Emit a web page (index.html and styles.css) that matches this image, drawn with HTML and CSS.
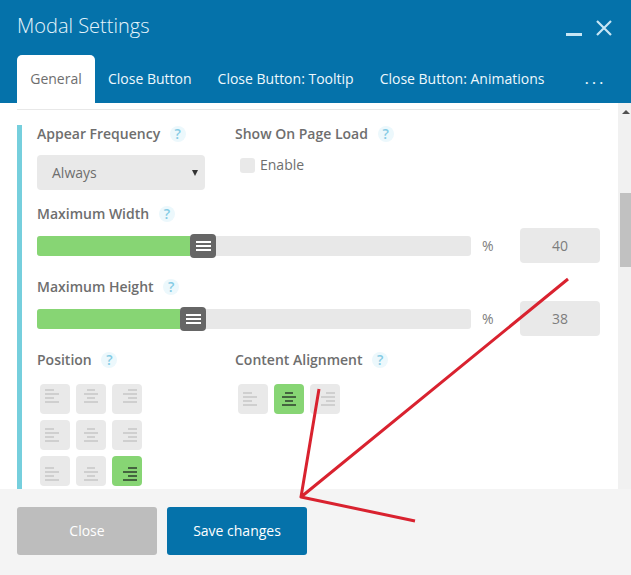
FILE: index.html
```html
<!DOCTYPE html>
<html>
<head>
    <meta charset="utf-8">
    <title>Modal Settings</title>
    <link rel="stylesheet" href="styles.css">
</head>
<body>

<div class="modal">
    <div class="modal-header">
        <div class="title-row">
            <div class="modal-title">Modal Settings</div>
            <div class="window-btns">
                <span class="minimize"></span>
                <svg class="close-x" viewBox="0 0 16 16"><path d="M1 1L15 15M15 1L1 15"/></svg>
            </div>
        </div>
        <div class="tabs">
            <div class="tab active">General</div>
            <div class="tab">Close Button</div>
            <div class="tab">Close Button: Tooltip</div>
            <div class="tab">Close Button: Animations</div>
            <div class="tab-more">...</div>
        </div>
    </div>

    <div class="modal-body">
        <div class="scroll-area">
            <div class="divider"></div>
            <div class="panel">
                <div class="two-cols first-row">
                    <div class="col-left">
                        <div class="field-label">Appear Frequency <span class="help">?</span></div>
                        <div class="select-box">Always<span class="select-arrow"></span></div>
                    </div>
                    <div class="col-right">
                        <div class="field-label">Show On Page Load <span class="help">?</span></div>
                        <label class="check-row"><span class="checkbox"></span>Enable</label>
                    </div>
                </div>

                <div class="field-label width-label">Maximum Width <span class="help">?</span></div>
                <div class="slider-row">
                    <div class="track">
                        <div class="fill" style="width: 153px"></div>
                        <div class="handle"><span></span></div>
                    </div>
                    <span class="unit">%</span>
                    <div class="num-box">40</div>
                </div>

                <div class="field-label height-label">Maximum Height <span class="help">?</span></div>
                <div class="slider-row">
                    <div class="track">
                        <div class="fill" style="width: 143px"></div>
                        <div class="handle"><span></span></div>
                    </div>
                    <span class="unit">%</span>
                    <div class="num-box">38</div>
                </div>

                <div class="two-cols position-row">
                    <div class="col-left">
                        <div class="field-label">Position <span class="help">?</span></div>
                        <div class="tile-grid">
                            <div class="tile"><svg viewBox="0 0 30 30"><path d="M5 6h9M5 10h14M5 14h9M5 18h14"/></svg></div>
                            <div class="tile"><svg viewBox="0 0 30 30"><path d="M11 6h8M8 10h14M11 14h8M8 18h14"/></svg></div>
                            <div class="tile"><svg viewBox="0 0 30 30"><path d="M16 6h9M11 10h14M16 14h9M11 18h14"/></svg></div>
                            <div class="tile"><svg viewBox="0 0 30 30"><path d="M5 9h9M5 13h14M5 17h9M5 21h14"/></svg></div>
                            <div class="tile"><svg viewBox="0 0 30 30"><path d="M11 9h8M8 13h14M11 17h8M8 21h14"/></svg></div>
                            <div class="tile"><svg viewBox="0 0 30 30"><path d="M16 9h9M11 13h14M16 17h9M11 21h14"/></svg></div>
                            <div class="tile"><svg viewBox="0 0 30 30"><path d="M5 12h9M5 16h14M5 20h9M5 24h14"/></svg></div>
                            <div class="tile"><svg viewBox="0 0 30 30"><path d="M11 12h8M8 16h14M11 20h8M8 24h14"/></svg></div>
                            <div class="tile on"><svg viewBox="0 0 30 30"><path d="M16 12h9M11 16h14M16 20h9M11 24h14"/></svg></div>
                        </div>
                    </div>
                    <div class="col-right">
                        <div class="field-label">Content Alignment <span class="help">?</span></div>
                        <div class="tile-row">
                            <div class="tile"><svg viewBox="0 0 30 30"><path d="M5 9h9M5 13h14M5 17h9M5 21h14"/></svg></div>
                            <div class="tile on"><svg viewBox="0 0 30 30"><path d="M11 9h8M8 13h14M11 17h8M8 21h14"/></svg></div>
                            <div class="tile"><svg viewBox="0 0 30 30"><path d="M16 9h9M11 13h14M16 17h9M11 21h14"/></svg></div>
                        </div>
                    </div>
                </div>
            </div>
        </div>
        <div class="scrollbar">
            <span class="scroll-up"></span>
            <div class="scroll-thumb"></div>
        </div>
    </div>

    <div class="modal-footer">
        <div class="btn btn-close">Close</div>
        <div class="btn btn-save">Save changes</div>
    </div>
</div>

<!-- red arrow drawn over the screenshot -->
<svg class="arrow" viewBox="0 0 631 575"><path d="M568 279L301 497L415 521M319 389L301 497"/></svg>

</body>
</html>
```

FILE: styles.css
```css
* {
    box-sizing: border-box;
}

html, body {
    margin: 0;
    height: 575px;
    overflow: hidden;
}

body {
    font-family: "Open Sans", "Liberation Sans", sans-serif;
    font-size: 14px;
    color: #6e6e6e;
    background: #fff;
}

.modal {
    display: flex;
    flex-direction: column;
    height: 575px;
}

/* header */
.modal-header {
    height: 103px;
    padding: 0 0 0 17px;
    background: #0572aa;
    color: #fff;
}

.title-row {
    display: flex;
    justify-content: space-between;
    height: 55px;
}

.modal-title {
    padding-top: 12px;
    font-size: 20px;
    line-height: 28px;
    font-weight: 300;
    color: #e6f5fc;
}

.window-btns {
    display: flex;
    align-items: flex-start;
    padding: 20px 19px 0 0;
}

.minimize {
    width: 16px;
    height: 3px;
    margin: 13px 14px 0 0;
    background: #c8e6f5;
}

.close-x {
    width: 16px;
    height: 16px;
}

.close-x path {
    fill: none;
    stroke: #c8e6f5;
    stroke-width: 2.2;
}

.tabs {
    display: flex;
    height: 48px;
}

.tab {
    padding: 14px 13px 0;
    line-height: 20px;
    white-space: nowrap;
    color: #eef8fd;
}

.tab.active {
    width: 78px;
    padding: 14px 0 0;
    text-align: center;
    background: #fff;
    color: #6e6e6e;
    border-radius: 5px 5px 0 0;
}

.tab-more {
    padding: 11px 0 0 27px;
    font-size: 17px;
    line-height: 24px;
    letter-spacing: 2.8px;
    color: #eef8fd;
}

/* body */
.modal-body {
    display: flex;
    flex: 1;
    min-height: 0;
}

.scroll-area {
    flex: 1;
    padding: 6px 18px 0 17px;
}

.divider {
    height: 1px;
    background: #e8e8e8;
}

.panel {
    height: 364px;
    margin-top: 15px;
    padding-left: 15px;
    border-left: 5px solid #76cfdd;
    overflow: hidden;
}

.two-cols {
    display: flex;
}

.col-left {
    width: 198px;
}

.field-label {
    font-weight: 600;
    line-height: 20px;
    white-space: nowrap;
}

.first-row .field-label {
    margin-top: -1px;
}

.help {
    display: inline-block;
    width: 16px;
    height: 16px;
    margin-left: 6px;
    border-radius: 50%;
    background: #ecf8fc;
    color: #85cbe4;
    font-size: 14px;
    font-weight: 600;
    line-height: 16px;
    text-align: center;
}

.select-box {
    position: relative;
    width: 168px;
    height: 35px;
    margin-top: 11px;
    padding-left: 15px;
    background: #e9e9e9;
    border-radius: 4px;
    line-height: 35px;
}

.select-arrow {
    position: absolute;
    top: 15px;
    right: 7px;
    border-style: solid;
    border-width: 6px 3px 0;
    border-color: #333 transparent transparent;
}

.check-row {
    display: flex;
    align-items: center;
    margin: 11px 0 0 5px;
    line-height: 20px;
}

.checkbox {
    width: 15px;
    height: 15px;
    margin-right: 5px;
    background: #e9e9e9;
    border-radius: 3px;
}

.width-label {
    margin-top: 14px;
}

.height-label {
    margin-top: 14px;
}

.slider-row {
    display: flex;
    align-items: center;
    height: 35px;
    margin-top: 4px;
}

.track {
    display: flex;
    width: 434px;
    height: 20px;
    background: #e8e8e8;
    border-radius: 3px;
}

.fill {
    height: 20px;
    background: #87d574;
    border-radius: 3px 0 0 3px;
}

.handle {
    display: flex;
    align-items: center;
    justify-content: center;
    flex: none;
    width: 26px;
    height: 24px;
    margin-top: -2px;
    background: #666;
    border-radius: 4px;
}

.handle span {
    width: 15px;
    height: 10px;
    border-top: 2px solid #fff;
    border-bottom: 2px solid #fff;
}

.handle span::after {
    content: "";
    display: block;
    height: 2px;
    margin-top: 2px;
    background: #fff;
}

.unit {
    width: 49px;
    padding-left: 11px;
    color: #7d7d7d;
}

.num-box {
    width: 80px;
    height: 35px;
    background: #e9e9e9;
    border-radius: 4px;
    color: #7d7d7d;
    line-height: 35px;
    text-align: center;
}

.position-row {
    margin-top: 14px;
}

.tile-grid {
    display: grid;
    grid-template-columns: repeat(3, 30px);
    gap: 6px;
    margin: 14px 0 0 3px;
}

.tile-row {
    display: flex;
    gap: 6px;
    margin: 14px 0 0 3px;
}

.tile {
    width: 30px;
    height: 30px;
    background: #e9e9e9;
    border-radius: 4px;
}

.tile svg {
    display: block;
    width: 30px;
    height: 30px;
}

.tile path {
    fill: none;
    stroke: #c6c6c6;
    stroke-width: 1.6;
}

.tile.on {
    background: #87d574;
}

.tile.on path {
    stroke: #44633f;
    stroke-width: 2;
}

/* scrollbar */
.scrollbar {
    position: relative;
    width: 13px;
    background: #f1f1f1;
}

.scroll-up {
    position: absolute;
    top: 7px;
    left: 4px;
    border-style: solid;
    border-width: 0 4px 4px;
    border-color: transparent transparent #505050;
}

.scroll-thumb {
    position: absolute;
    top: 90px;
    left: 2px;
    width: 11px;
    height: 74px;
    background: #c1c1c1;
}

/* footer */
.modal-footer {
    display: flex;
    gap: 10px;
    height: 86px;
    padding: 18px 17px 0;
    background: #f4f4f4;
}

.btn {
    width: 140px;
    height: 48px;
    border-radius: 3px;
    color: #fff;
    line-height: 48px;
    text-align: center;
}

.btn-close {
    background: #bdbdbd;
}

.btn-save {
    background: #0572aa;
}

.arrow {
    position: absolute;
    top: 0;
    left: 0;
    width: 631px;
    height: 575px;
    pointer-events: none;
}

.arrow path {
    fill: none;
    stroke: #d9222f;
    stroke-width: 3;
    stroke-linejoin: round;
}
```
